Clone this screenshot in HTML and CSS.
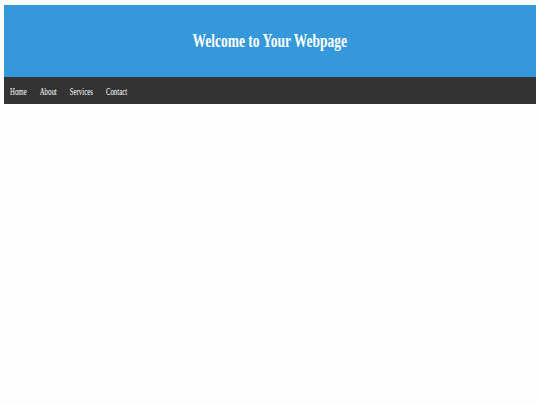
FILE: index.html
```html
<!DOCTYPE html>
<html>
<head>
<meta charset="utf-8">
<link rel="stylesheet" href="styles.css">
</head>
<body>
<header class="site-header">
  <h1 class="title">Welcome to Your Webpage</h1>
</header>
<nav class="site-nav">
  <div class="nav-links">
    <a href="#">Home</a>
    <a href="#">About</a>
    <a href="#">Services</a>
    <a href="#">Contact</a>
  </div>
</nav>
</body>
</html>
```
FILE: styles.css
```css
html, body { background: #fdfdfd; }
body {
  margin: 5px 4px;
  font-family: "Liberation Serif", serif;
}
.site-header {
  background: #3498db;
  height: 72px;
  display: flex;
  align-items: center;
  justify-content: center;
}
.title {
  margin: 0;
  color: #fff;
  font-size: 19px;
  font-weight: bold;
  transform: scaleX(0.71);
}
.site-nav {
  background: #333;
  height: 27px;
  display: flex;
  align-items: center;
  padding-left: 6px;
}
.nav-links {
  display: flex;
  gap: 21px;
  transform: scaleX(0.62);
  transform-origin: left center;
}
.nav-links a {
  color: #fff;
  text-decoration: none;
  font-size: 11px;
}
```
